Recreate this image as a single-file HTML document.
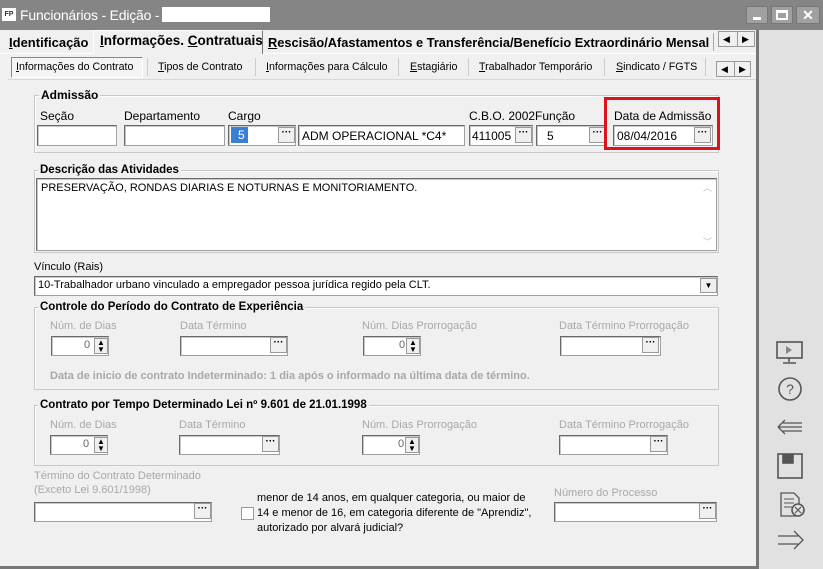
<!DOCTYPE html>
<html><head><meta charset="utf-8">
<style>
*{box-sizing:border-box;margin:0;padding:0}
body{width:823px;height:569px;overflow:hidden;background:#f0f0f0;font-family:"Liberation Sans",sans-serif;font-size:12px;color:#000;position:relative}
.a{position:absolute;white-space:nowrap}
.inp{position:absolute;background:#fff;border:1px solid #a0a0a0;border-top-color:#696969;border-left-color:#696969;box-shadow:inset 1px 1px 0 #c8c8c8;}
.btn{position:absolute;width:17px;height:16px;background:#f0f0f0;border:1px solid #999;font-size:10px;font-weight:bold;text-align:center;line-height:10px}
.grp{position:absolute;border:1px solid #c8c8c8;box-shadow:inset 1px 1px 0 #fff}
.gt{position:absolute;background:#f0f0f0;font-weight:bold;padding:0 2px;top:-8px;left:4px;font-size:12px}
.gray{color:#a8a8a8;font-size:11px}
.spin{position:absolute;width:14px;height:16px;font-size:8px;line-height:7px;text-align:center;border:1px solid #999;background:#f0f0f0}
.sx{transform-origin:0 0}
</style></head><body>
<div class="a" style="left:0;top:0;width:823px;height:30px;background:#858585"></div>
<div class="a" style="left:2px;top:8px;width:14px;height:13px;background:#fff;color:#333;font-size:7px;font-weight:bold;text-align:center;line-height:13px">FP</div>
<div class="a" style="left:20px;top:7px;color:#fff;font-size:14px;letter-spacing:-0.2px">Funcionários - Edição -</div>
<div class="a" style="left:162px;top:7px;width:108px;height:15px;background:#fff"></div>
<div class="a" style="left:746px;top:6px;width:22px;height:18px;background:#a0a0a0;border:1px solid #777"><div style="position:absolute;left:6px;top:10px;width:8px;height:3px;background:#fff"></div></div>
<div class="a" style="left:771px;top:6px;width:22px;height:18px;background:#a0a0a0;border:1px solid #777"><div style="position:absolute;left:4px;top:3px;width:12px;height:10px;border:2px solid #fff;border-top-width:3px"></div></div>
<div class="a" style="left:796px;top:6px;width:24px;height:18px;background:#a0a0a0;border:1px solid #777;color:#fff;font-weight:bold;font-size:14px;text-align:center;line-height:16px">✕</div>
<div class="a" style="left:756px;top:30px;width:3px;height:539px;background:#777"></div>
<div class="a" style="left:759px;top:30px;width:64px;height:539px;background:#e1e1e1"></div>
<div class="a" style="left:0;top:30px;width:756px;height:24px;background:#f0f0f0;border-bottom:1px solid #fff"></div>
<div class="a sx" style="left:9px;top:35px;font-weight:bold;font-size:13px"><u>I</u>dentificação</div>
<div class="a" style="left:93px;top:30px;width:170px;height:24px;background:#f0f0f0;border:1px solid #fff;border-right:1px solid #777;border-bottom:none"></div>
<div class="a sx" style="left:100px;top:33px;font-weight:bold;font-size:13.5px"><u>I</u>nformações. <u>C</u>ontratuais</div>
<div class="a sx" style="left:268px;top:35px;font-weight:bold;font-size:13px;transform:scaleX(0.985)"><u>R</u>escisão/Afastamentos e Transferência/Benefício Extraordinário Mensal</div>
<div class="a" style="left:713px;top:33px;width:4px;height:18px;background:#f0f0f0;border-left:1px solid #aaa"></div>
<div class="a" style="left:718px;top:31px;width:37px;height:16px;border:1px solid #999;background:#f0f0f0;font-size:9px;line-height:14px"><span style="position:absolute;left:4px">◀</span><span style="position:absolute;left:18px;top:0;width:1px;height:14px;background:#999"></span><span style="position:absolute;left:23px">▶</span></div>
<div class="a" style="left:8px;top:54px;width:748px;height:26px;border-bottom:1px solid #d8d8d8"></div>
<div class="a" style="left:11px;top:57px;width:132px;height:21px;border:1px solid #888;border-right-color:#fff;border-bottom-color:#fff;background:#f4f4f4"></div>
<div class="a sx" style="left:16px;top:61px;font-size:11px;transform:scaleX(0.97)"><u>I</u>nformações do Contrato</div>
<div class="a sx" style="left:158px;top:61px;font-size:11px;transform:scaleX(0.97)"><u>T</u>ipos de Contrato</div>
<div class="a sx" style="left:266px;top:61px;font-size:11px;transform:scaleX(0.97)"><u>I</u>nformações para Cálculo</div>
<div class="a sx" style="left:410px;top:61px;font-size:11px;transform:scaleX(0.97)"><u>E</u>stagiário</div>
<div class="a sx" style="left:479px;top:61px;font-size:11px;transform:scaleX(0.97)"><u>T</u>rabalhador Temporário</div>
<div class="a sx" style="left:616px;top:61px;font-size:11px;transform:scaleX(0.97)"><u>S</u>indicato / FGTS</div>
<div class="a" style="left:147px;top:58px;width:1px;height:18px;background:#ccc"></div>
<div class="a" style="left:255px;top:58px;width:1px;height:18px;background:#ccc"></div>
<div class="a" style="left:398px;top:58px;width:1px;height:18px;background:#ccc"></div>
<div class="a" style="left:468px;top:58px;width:1px;height:18px;background:#ccc"></div>
<div class="a" style="left:604px;top:58px;width:1px;height:18px;background:#ccc"></div>
<div class="a" style="left:705px;top:58px;width:1px;height:18px;background:#ccc"></div>
<div class="a" style="left:716px;top:61px;width:35px;height:16px;border:1px solid #999;background:#f0f0f0;font-size:9px;line-height:14px"><span style="position:absolute;left:4px">◀</span><span style="position:absolute;left:17px;top:0;width:1px;height:14px;background:#999"></span><span style="position:absolute;left:22px">▶</span></div>
<div class="grp" style="left:34px;top:95px;width:685px;height:58px"><div class="gt" style="left:4px">Admissão</div></div>
<div class="a" style="left:40px;top:109px;font-size:12px">Seção</div>
<div class="a" style="left:124px;top:109px;font-size:12px">Departamento</div>
<div class="a" style="left:228px;top:109px;font-size:12px">Cargo</div>
<div class="a" style="left:469px;top:109px;font-size:12px">C.B.O. 2002Função</div>
<div class="a" style="left:614px;top:109px;font-size:12px">Data de Admissão</div>
<div class="inp" style="left:37px;top:125px;width:80px;height:21px"></div>
<div class="inp" style="left:124px;top:125px;width:101px;height:21px"></div>
<div class="inp" style="left:228px;top:125px;width:68px;height:21px"><span style="position:absolute;left:2px;top:1px;background:#3b7fd4;color:#fff;font-size:12px;padding:1px 3px 1px 7px">5</span></div>
<div class="btn" style="left:278px;top:127px">···</div>
<div class="inp" style="left:298px;top:125px;width:167px;height:21px"><span style="position:absolute;left:3px;top:3px;font-size:12px">ADM OPERACIONAL *C4*</span></div>
<div class="inp" style="left:469px;top:125px;width:64px;height:21px"><span style="position:absolute;left:2px;top:3px;font-size:12px">411005</span></div>
<div class="btn" style="left:515px;top:127px">···</div>
<div class="inp" style="left:536px;top:125px;width:71px;height:21px"><span style="position:absolute;left:10px;top:3px;font-size:12px">5</span></div>
<div class="btn" style="left:589px;top:127px">···</div>
<div class="inp" style="left:613px;top:125px;width:100px;height:21px"><span style="position:absolute;left:3px;top:3px;font-size:12px">08/04/2016</span></div>
<div class="btn" style="left:694px;top:127px">···</div>
<div class="a" style="left:604px;top:97px;width:116px;height:53px;border:3px solid #d9141b"></div>
<div class="grp" style="left:34px;top:170px;width:685px;height:83px"><div class="gt" style="left:3px;top:-7px;font-size:11.5px">Descrição das Atividades</div></div>
<div class="inp" style="left:36px;top:178px;width:681px;height:73px"><span style="position:absolute;left:4px;top:3px;font-size:11px">PRESERVAÇÃO, RONDAS DIARIAS E NOTURNAS E MONITORIAMENTO.</span><span style="position:absolute;right:4px;top:2px;color:#bbb;font-size:9px">︿</span><span style="position:absolute;right:4px;bottom:2px;color:#bbb;font-size:9px">﹀</span></div>
<div class="a" style="left:34px;top:261px;font-size:11px">Vínculo (Rais)</div>
<div class="inp" style="left:34px;top:276px;width:684px;height:20px"><span style="position:absolute;left:3px;top:2px;font-size:11px">10-Trabalhador urbano vinculado a empregador pessoa jurídica regido pela CLT.</span></div>
<div class="btn" style="left:700px;top:278px;height:15px;font-size:8px;line-height:13px">▼</div>
<div class="grp" style="left:34px;top:307px;width:685px;height:83px"><div class="gt" style="left:3px;top:-7px;font-size:11.5px">Controle do Período do Contrato de Experiência</div></div>
<div class="a gray" style="left:50px;top:320px">Núm. de Dias</div>
<div class="a gray" style="left:180px;top:320px">Data Término</div>
<div class="a gray" style="left:362px;top:320px">Núm. Dias Prorrogação</div>
<div class="a gray" style="left:559px;top:320px">Data Término Prorrogação</div>
<div class="inp" style="left:51px;top:336px;width:58px;height:20px"><span style="position:absolute;left:32px;top:2px;font-size:11px;color:#666">0</span></div>
<div class="spin" style="left:94px;top:338px">▲<br>▼</div>
<div class="inp" style="left:180px;top:336px;width:108px;height:20px"></div>
<div class="btn" style="left:270px;top:337px">···</div>
<div class="inp" style="left:363px;top:336px;width:58px;height:20px"><span style="position:absolute;left:35px;top:2px;font-size:11px;color:#666">0</span></div>
<div class="spin" style="left:406px;top:338px">▲<br>▼</div>
<div class="inp" style="left:560px;top:336px;width:101px;height:20px"></div>
<div class="btn" style="left:642px;top:337px">···</div>
<div class="a" style="left:50px;top:370px;font-size:11px;font-weight:bold;color:#a8a8a8">Data de inicio de contrato Indeterminado: 1 dia após o informado na última data de término.</div>
<div class="grp" style="left:34px;top:405px;width:685px;height:61px"><div class="gt" style="left:3px;top:-7px;font-size:11.5px">Contrato por Tempo Determinado Lei nº 9.601 de 21.01.1998</div></div>
<div class="a gray" style="left:50px;top:419px">Núm. de Dias</div>
<div class="a gray" style="left:179px;top:419px">Data Término</div>
<div class="a gray" style="left:362px;top:419px">Núm. Dias Prorrogação</div>
<div class="a gray" style="left:559px;top:419px">Data Término Prorrogação</div>
<div class="inp" style="left:50px;top:435px;width:58px;height:20px"><span style="position:absolute;left:32px;top:2px;font-size:11px;color:#666">0</span></div>
<div class="spin" style="left:94px;top:437px">▲<br>▼</div>
<div class="inp" style="left:179px;top:435px;width:101px;height:20px"></div>
<div class="btn" style="left:262px;top:436px">···</div>
<div class="inp" style="left:362px;top:435px;width:58px;height:20px"><span style="position:absolute;left:35px;top:2px;font-size:11px;color:#666">0</span></div>
<div class="spin" style="left:405px;top:437px">▲<br>▼</div>
<div class="inp" style="left:559px;top:435px;width:109px;height:20px"></div>
<div class="btn" style="left:650px;top:436px">···</div>
<div class="a gray" style="left:34px;top:469px;line-height:14px">Término do Contrato Determinado<br>(Exceto Lei 9.601/1998)</div>
<div class="inp" style="left:34px;top:502px;width:178px;height:20px"></div>
<div class="btn" style="left:194px;top:503px">···</div>
<div class="a" style="left:241px;top:507px;width:13px;height:13px;border:1px solid #999;background:#fff"></div>
<div class="a" style="left:257px;top:491px;font-size:11px;line-height:15px">menor de 14 anos, em qualquer categoria, ou maior de<br>14 e menor de 16, em categoria diferente de "Aprendiz",<br>autorizado por alvará judicial?</div>
<div class="a gray" style="left:554px;top:487px">Número do Processo</div>
<div class="inp" style="left:554px;top:502px;width:163px;height:20px"></div>
<div class="btn" style="left:699px;top:503px">···</div>
<div class="a" style="left:0;top:566px;width:756px;height:3px;background:#777"></div>
<svg class="a" style="left:770px;top:335px" width="44" height="220" viewBox="0 0 44 220" fill="none" stroke="#555" stroke-width="1.6">
<rect x="7" y="7" width="25" height="16"/><path d="M16 11 L22 15 L16 19Z" fill="#888" stroke="none"/><path d="M19 23 V27 M13 28 H26"/>
<circle cx="20" cy="54" r="11"/><text x="20" y="59" font-family="Liberation Sans" font-size="14" text-anchor="middle" fill="#555" stroke="none">?</text>
<path d="M8 92 H32 M8 92 L15 85 M8 92 L15 99 M13 88 H32 M13 96 H32" stroke-width="1.3"/>
<rect x="8" y="119" width="24" height="24"/><rect x="13" y="120" width="10" height="8" fill="#555"/>
<path d="M11 158 H24 L29 163 V181 H11 Z" stroke-width="1.3"/><path d="M14 164 H24 M14 168 H24 M14 172 H22" stroke-width="1"/><circle cx="28" cy="175" r="6" fill="#e1e1e1"/><path d="M25 172 L31 178 M31 172 L25 178" stroke-width="1.2"/>
<path d="M8 201 H28 M8 209 H28 M24 196 L33 205 L24 214" stroke-width="1.3"/>
</svg>
</body></html>
